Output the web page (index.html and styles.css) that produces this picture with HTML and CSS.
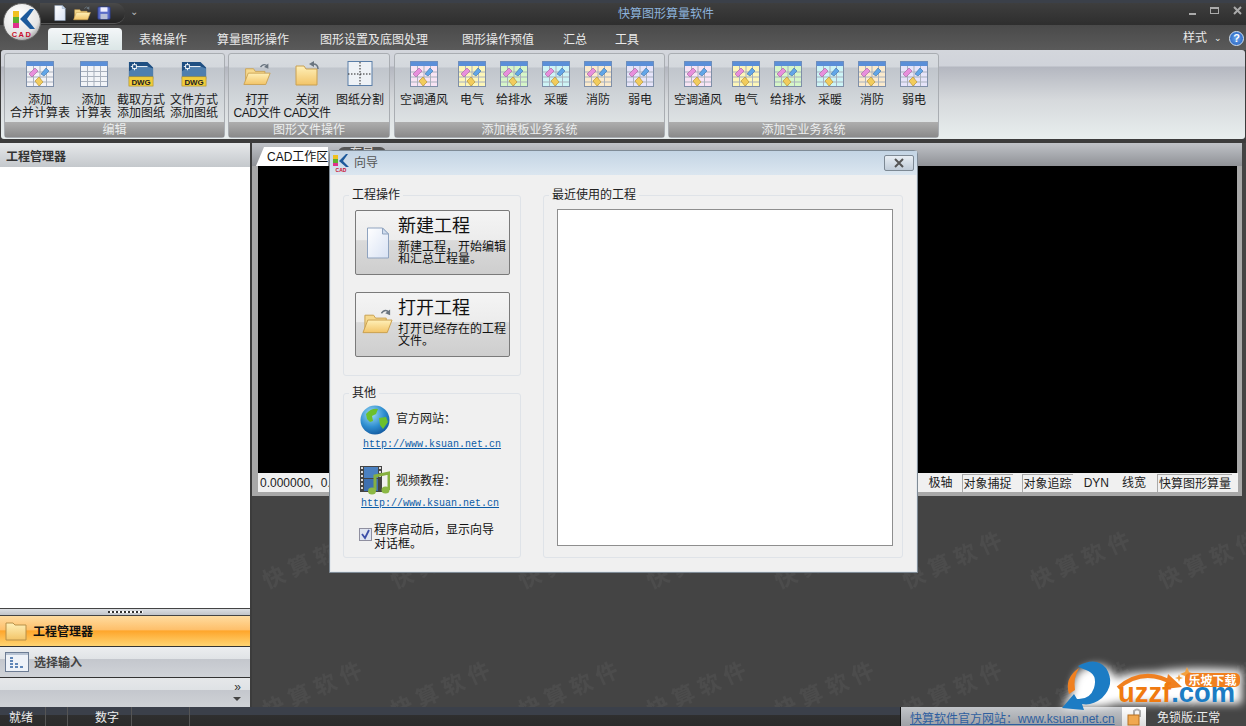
FILE: index.html
```html
<!DOCTYPE html>
<html lang="zh-CN">
<head>
<meta charset="utf-8">
<title>快算图形算量软件</title>
<link rel="stylesheet" href="styles.css">
</head>
<body>
<svg class="defs" width="0" height="0">
  <defs>
    <linearGradient id="fold" x1="0" y1="0" x2="0" y2="1"><stop offset="0" stop-color="#fff0b8"/><stop offset="1" stop-color="#f2c468"/></linearGradient>
    <linearGradient id="page" x1="0" y1="0" x2="1" y2="1"><stop offset="0" stop-color="#fff"/><stop offset="1" stop-color="#d8e2f4"/></linearGradient>
    <radialGradient id="sea" cx=".38" cy=".3" r=".8"><stop offset="0" stop-color="#9fdcf5"/><stop offset=".55" stop-color="#2f8ed0"/><stop offset="1" stop-color="#0d4f96"/></radialGradient>
    <symbol id="table" viewBox="0 0 28 26">
      <rect x=".5" y=".5" width="27" height="25" fill="var(--tint)" stroke="#7f8fa8"/>
      <rect x=".5" y=".5" width="27" height="4.500" fill="#5b8fd8"/>
      <path d="M1 11h26M1 16h26M1 21h26M7.500 5v20M14 5v20M20.500 5v20" stroke="#a9b1bd" fill="none"/>
      <path d="M3 13l6-6 3 3-6 6z" fill="#e88fdc" stroke="#a0609c" stroke-width=".6"/>
      <path d="M15 13l5-6 3 3-5 5z" fill="#62a6e8" stroke="#3a70a8" stroke-width=".6"/>
      <path d="M9 20l4-4 4 5-4 4z" fill="#f2cc5c" stroke="#b08c2c" stroke-width=".6"/>
    </symbol>
    <symbol id="plain" viewBox="0 0 28 26">
      <rect x=".5" y=".5" width="27" height="25" fill="#f2f4f8" stroke="#7f8fa8"/>
      <rect x=".5" y=".5" width="27" height="4.500" fill="#5b8fd8"/>
      <path d="M1 10.500h26M1 15.500h26M1 20.500h26M7.500 5v20M14 5v20M20.500 5v20" stroke="#a9b1bd" fill="none"/>
    </symbol>
    <symbol id="folderopen" viewBox="0 0 32 28">
      <path d="M3 24V8h9l2 3h11v13z" fill="#f6d98e" stroke="#c9a050"/>
      <path d="M1 26l5-13h25l-5 13z" fill="url(#fold)" stroke="#c9a050"/>
      <path d="M20 6q4-5 8-1" fill="none" stroke="#6a7580" stroke-width="1.500"/><path d="M29 2l0 6-5-2z" fill="#6a7580"/>
    </symbol>
    <symbol id="doc" viewBox="0 0 24 32">
      <path d="M1.500 1h15l6 6v24h-21z" fill="url(#page)" stroke="#8fa3bf"/><path d="M16.500 1v6h6z" fill="#cfdcee" stroke="#8fa3bf"/>
    </symbol>
    <symbol id="dwg" viewBox="0 0 28 28">
      <path d="M1 1h20l6 6v12H1z" fill="#1f4f82"/>
      <path d="M1 11Q14 2 27 8v11H1z" fill="#4f7fae"/>
      <path d="M3 6h18M7 2v8" stroke="#fff" fill="none"/><rect x="5" y="4" width="4" height="4" fill="#1f4f82" stroke="#fff"/>
      <rect x="1" y="17" width="26" height="10" fill="#f0cc3c" stroke="#a88820" stroke-width=".6"/>
      <text x="14" y="26" text-anchor="middle" class="dwgt">DWG</text>
    </symbol>
  </defs>
</svg>
<div class="app">
  <header class="titlebar">
    <div class="qat">
      <svg class="qi" width="14" height="16" viewBox="0 0 24 32"><use href="#doc"/></svg>
      <svg class="qi" width="18" height="16" viewBox="0 0 32 28"><use href="#folderopen"/></svg>
      <svg class="qi" width="14" height="14" viewBox="0 0 16 16"><rect x="1" y="1" width="14" height="14" rx="1" fill="#5a6cc8" stroke="#2c3a80"/><rect x="4" y="1.500" width="8" height="5" fill="#eef"/><rect x="4" y="9" width="8" height="6" fill="#b8bfd8"/></svg>
    </div>
    <span class="qmore">⌄</span>
    <div class="title">快算图形算量软件</div>
    <div class="winbtns">
      <svg width="10" height="12" viewBox="0 0 10 12"><rect x="1" y="8" width="7" height="2" fill="#aaa"/></svg>
      <svg width="12" height="12" viewBox="0 0 12 12"><rect x="1.500" y="2.500" width="8" height="6" fill="none" stroke="#aaa"/><rect x="1" y="2" width="9" height="2" fill="#aaa"/></svg>
      <svg width="12" height="12" viewBox="0 0 12 12"><path d="M2 2l7 7M9 2l-7 7" stroke="#aaa" stroke-width="2"/></svg>
    </div>
  </header>

  <nav class="tabs">
    <span class="tab active">工程管理</span>
    <span class="tab t2">表格操作</span>
    <span class="tab t3">算量图形操作</span>
    <span class="tab t4">图形设置及底图处理</span>
    <span class="tab t5">图形操作预值</span>
    <span class="tab t6">汇总</span>
    <span class="tab t7">工具</span>
    <div class="tabright">
      <span>样式</span><span class="caret">⌄</span><span class="help">?</span>
    </div>
  </nav>

  <section class="ribbon">
    <div class="group g1">
      <div class="grow">
        <div class="rb w64"><svg class="ic"><use href="#table" style="--tint:#f2f2f6"/></svg><span>添加<br>合并计算表</span></div>
        <div class="rb w43"><svg class="ic"><use href="#plain"/></svg><span>添加<br>计算表</span></div>
        <div class="rb w52"><svg class="ic"><use href="#dwg"/></svg><span>截取方式<br>添加图纸</span></div>
        <div class="rb w54"><svg class="ic"><use href="#dwg"/></svg><span>文件方式<br>添加图纸</span></div>
      </div>
      <div class="glabel">编辑</div>
    </div>
    <div class="group g2">
      <div class="grow">
        <div class="rb w48 tight"><svg class="ic"><use href="#folderopen"/></svg><span>打开<br>CAD文件</span></div>
        <div class="rb w52 tight"><svg class="ic" viewBox="0 0 28 26"><path d="M3 24V5h8l2 3h11v16z" fill="url(#fold)" stroke="#c9a050"/><path d="M25 8q0-5-5-5" fill="none" stroke="#6a7580" stroke-width="1.500"/><path d="M16 3l5-3v6z" fill="#6a7580"/></svg><span>关闭<br>CAD文件</span></div>
        <div class="rb w54"><svg class="ic" viewBox="0 0 28 26"><rect x="2" y=".5" width="24" height="24" fill="#eef2f6" stroke="#5b7fa8"/><path d="M14 1v23M2 13h24" stroke="#222" stroke-dasharray="1.500 1.500"/></svg><span>图纸分割</span></div>
      </div>
      <div class="glabel">图形文件操作</div>
    </div>
    <div class="group g3">
      <div class="grow">
        <div class="rb w54"><svg class="ic"><use href="#table" style="--tint:#f8e4f4"/></svg><span>空调通风</span></div>
        <div class="rb w42"><svg class="ic"><use href="#table" style="--tint:#fdf6b8"/></svg><span>电气</span></div>
        <div class="rb w42"><svg class="ic"><use href="#table" style="--tint:#d6f6c8"/></svg><span>给排水</span></div>
        <div class="rb w42"><svg class="ic"><use href="#table" style="--tint:#cdf4f6"/></svg><span>采暖</span></div>
        <div class="rb w42"><svg class="ic"><use href="#table" style="--tint:#fbeacc"/></svg><span>消防</span></div>
        <div class="rb w42"><svg class="ic"><use href="#table" style="--tint:#e6e4fa"/></svg><span>弱电</span></div>
      </div>
      <div class="glabel">添加模板业务系统</div>
    </div>
    <div class="group g3">
      <div class="grow">
        <div class="rb w54"><svg class="ic"><use href="#table" style="--tint:#f8e4f4"/></svg><span>空调通风</span></div>
        <div class="rb w42"><svg class="ic"><use href="#table" style="--tint:#fdf6b8"/></svg><span>电气</span></div>
        <div class="rb w42"><svg class="ic"><use href="#table" style="--tint:#d6f6c8"/></svg><span>给排水</span></div>
        <div class="rb w42"><svg class="ic"><use href="#table" style="--tint:#cdf4f6"/></svg><span>采暖</span></div>
        <div class="rb w42"><svg class="ic"><use href="#table" style="--tint:#fbeacc"/></svg><span>消防</span></div>
        <div class="rb w42"><svg class="ic"><use href="#table" style="--tint:#e6e4fa"/></svg><span>弱电</span></div>
      </div>
      <div class="glabel">添加空业务系统</div>
    </div>
  </section>

  <main class="main">
    <aside class="side">
      <div class="sidehead">工程管理器</div>
      <div class="sidebody"></div>
      <div class="splitter"><i></i></div>
      <div class="navitem on">
        <svg width="22" height="20" viewBox="0 0 22 20"><path d="M1 19V2h7l2 2h11v15z" fill="url(#fold)" stroke="#b89048"/></svg>
        <b>工程管理器</b>
      </div>
      <div class="navitem">
        <svg width="24" height="20" viewBox="0 0 24 20"><rect x=".5" y=".5" width="23" height="19" fill="#eef2f8" stroke="#6c7c94"/><rect x="1" y="1" width="22" height="2" fill="#b8c4d4"/><path d="M5 6h3M5 9h3M5 12h3M5 15h3M10 12h3M15 15h3M10 15h3" stroke="#5f86b8" stroke-width="2"/></svg>
        <b class="dim">选择输入</b>
      </div>
      <div class="navfoot"><span>»</span><i></i></div>
    </aside>

    <section class="work">
      <div class="cadwin">
        <div class="cadtabs"><span class="cadtab">CAD工作区</span><span class="cadtab2">布局</span></div>
        <div class="canvas"></div>
        <div class="cmdrow">
          <span class="coord">0.000000, 0.000000</span>
          <span class="cell">极轴</span>
          <span class="cell box">对象捕捉</span>
          <span class="cell box">对象追踪</span>
          <span class="cell m11">DYN</span>
          <span class="cell m13">线宽</span>
          <span class="cell box m11 last">快算图形算量</span>
        </div>
      </div>
      <svg class="wm" width="994" height="210">
        <defs>
          <pattern id="wmp" width="128" height="130" patternUnits="userSpaceOnUse">
            <text x="15" y="92" class="wmt" transform="rotate(-24 15 92)">快算软件</text>
          </pattern>
        </defs>
        <rect width="994" height="210" fill="url(#wmp)"/>
      </svg>
    </section>
  </main>

  <footer class="status">
    <span class="st s1">就绪</span><span class="st s2"></span><span class="st s3">数字</span><span class="st s4"></span>
    <div class="stright">
      <a class="stlink">快算软件官方网站：www.ksuan.net.cn</a>
      <span class="lock"><svg width="17" height="19" viewBox="0 0 17 19"><path d="M8 8V4q3-3 6 0v6" fill="none" stroke="#aaa" stroke-width="2"/><rect x="2" y="8" width="11" height="10" fill="#f0a850" stroke="#b87020"/></svg></span>
      <span class="free">免锁版:正常</span>
    </div>
  </footer>
</div>

<svg class="applogo" width="40" height="40" viewBox="0 0 40 40">
  <defs><radialGradient id="orb" cx=".4" cy=".3" r=".8"><stop offset="0" stop-color="#fff"/><stop offset=".7" stop-color="#e4e4e4"/><stop offset="1" stop-color="#8a8a8a"/></radialGradient></defs>
  <circle cx="20" cy="20" r="18.500" fill="url(#orb)" stroke="#666"/>
  <rect x="11" y="9" width="6" height="6" fill="#f0c020"/><rect x="11" y="15" width="6" height="6" fill="#5cb030"/><rect x="11" y="21" width="6" height="5" fill="#e0308c"/>
  <path d="M28 7L18 17l10 10h5L25 17l7-10z" fill="#1d5a9c"/>
  <text x="20" y="35" text-anchor="middle" class="cadt">CAD</text>
</svg>

<div class="dialog">
  <div class="dlgtitle">
    <svg width="16" height="18" viewBox="0 0 16 18"><rect x="0" y="1" width="5" height="4" fill="#f0c020"/><rect x="0" y="5" width="5" height="4" fill="#5cb030"/><rect x="0" y="9" width="5" height="3" fill="#e0308c"/><path d="M13 0L6 7l7 6h3L10 7l5-7z" fill="#1d5a9c"/><text x="8" y="18" text-anchor="middle" class="cadm">CAD</text></svg>
    <span>向导</span>
    <span class="dlgx"><svg width="12" height="10" viewBox="0 0 12 10"><path d="M2 1l8 8M10 1l-8 8" stroke="#555" stroke-width="2"/></svg></span>
  </div>
  <div class="dlgbody">
    <div class="dlgleft">
      <fieldset class="gbox ops">
        <legend>工程操作</legend>
        <div class="bigbtn">
          <svg class="bigic doc" width="24" height="32" viewBox="0 0 24 32"><use href="#doc"/></svg>
          <div><h2>新建工程</h2><p>新建工程，开始编辑和汇总工程量。</p></div>
        </div>
        <div class="bigbtn">
          <svg class="bigic fo" width="31" height="28" viewBox="0 0 32 28"><use href="#folderopen"/></svg>
          <div><h2>打开工程</h2><p>打开已经存在的工程文件。</p></div>
        </div>
      </fieldset>
      <fieldset class="gbox other">
        <legend>其他</legend>
        <div class="orow r1">
          <svg width="30" height="30" viewBox="0 0 30 30"><circle cx="15" cy="15" r="14.500" fill="url(#sea)"/><path d="M6 9q5-6 12-5l-2 5-4 2 1 5-3 1-3-3zM19 13l7-1 2 5-5 7-3-4z" fill="#6cc02c"/></svg>
          <span>官方网站：</span>
        </div>
        <a class="olink">http://www.ksuan.net.cn</a>
        <div class="orow r2">
          <svg width="30" height="30" viewBox="0 0 30 30"><rect x="0" y="0" width="22" height="26" fill="#444"/><rect x="4" y="1" width="14" height="11" fill="#4a80c0"/><rect x="4" y="13" width="14" height="12" fill="#3e70b0"/><path d="M1 2h2M1 6h2M1 10h2M1 14h2M1 18h2M1 22h2M19 2h2M19 6h2M19 10h2" stroke="#ddd" stroke-width="2"/><path d="M15 24V10l14-3v17" fill="none" stroke="#86b040" stroke-width="3"/><ellipse cx="12" cy="25" rx="4" ry="3.500" fill="#8cb844"/><ellipse cx="25.500" cy="24" rx="4" ry="3.500" fill="#8cb844"/></svg>
          <span>视频教程：</span>
        </div>
        <a class="olink l2">http://www.ksuan.net.cn</a>
        <label class="chk"><span class="cb"><svg width="11" height="11" viewBox="0 0 11 11"><path d="M2 5l3 4 4-8" fill="none" stroke="#3c4fa8" stroke-width="1.800"/></svg></span><span class="chktxt">程序启动后，显示向导对话框。</span></label>
      </fieldset>
    </div>
    <fieldset class="gbox recent">
      <legend>最近使用的工程</legend>
      <div class="listbox"></div>
    </fieldset>
  </div>
</div>

<svg class="uzzf" width="190" height="60" viewBox="0 0 190 60">
  <path d="M6 50L16 34Q16 12 34 8Q52 4 60 20Q70 14 100 14Q130 8 186 12V46H60Q50 50 30 50Z" class="glow"/>
  <path d="M22 8Q40 -2 50 10Q60 26 46 40Q36 48 26 46L28 52L6 50L18 36L21 41Q34 42 38 30Q42 16 30 12Q24 10 22 8Z" fill="#1c7cc4"/>
  <path d="M13 36Q8 20 23 10Q17 20 19 32Z" fill="#f08020"/>
  <path d="M62 30Q88 8 118 26" fill="none" stroke="#f08020" stroke-width="4"/>
  <path d="M112 16l14 13-17 2z" fill="#f08020"/>
  <path d="M129 14l2-5 2 5 5 2-5 2-2 5-2-5-5-2zM122 19l1-3 1 3 3 1-3 1-1 3-1-3-3-1z" fill="#f2a040"/>
  <rect x="129" y="15" width="55" height="14" rx="5" fill="#f08020"/>
  <text x="156.500" y="26.500" text-anchor="middle" class="uzt">乐坡下载</text>
  <text x="62" y="44" class="uzb" textLength="117" lengthAdjust="spacingAndGlyphs"><tspan fill="#f07a10">uzzf</tspan><tspan fill="#1c7cc4">.com</tspan></text>
</svg>
</body>
</html>
```
FILE: styles.css
```css
* { box-sizing: border-box; }
html, body { margin: 0; padding: 0; }
body {
  width: 1246px; height: 726px; overflow: hidden; position: relative;
  background: #3c3c3c; color: #1c1c1c;
  font: 12px/13px "Liberation Sans", "Noto Sans CJK SC", sans-serif;
}
.defs { position: absolute; }
.app { display: flex; flex-direction: column; height: 726px; }

.titlebar {
  height: 25px; flex: none; display: flex; align-items: center; padding-left: 40px; position: relative;
  border-top: 3px solid #3b4049;
  background: linear-gradient(#3e3e3e, #2e2e2e);
}
.qat {
  width: 85px; height: 20px; margin-top: -2px; display: flex; align-items: center; gap: 6px; padding-left: 13px;
  background: linear-gradient(#4a4a4a, #222); border-radius: 0 10px 10px 0; box-shadow: 0 1px 0 #555;
}
.qi { flex: none; }
.qmore { margin: -6px 0 0 5px; color: #bbb; font-size: 10px; }
.title { position: absolute; left: 566px; width: 200px; top: 4px; text-align: center; color: #8db3dc; line-height: 14px; }
.winbtns { position: absolute; right: 2px; top: 2px; display: flex; gap: 11px; align-items: center; }

.tabs {
  height: 25px; flex: none; display: flex; align-items: flex-end; padding-left: 48px; position: relative;
  color: #eaeaea; background: linear-gradient(#4a4a4a, #5a5a5a);
}
.tab { height: 22px; line-height: 25px; white-space: nowrap; }
.tab.active {
  width: 74px; text-align: center; color: #111; border-radius: 4px 4px 0 0;
  background: linear-gradient(#f4f7f9, #dbe6e6);
}
.t2 { margin-left: 17px; }
.t3 { margin-left: 30px; }
.t4 { margin-left: 31px; }
.t5 { margin-left: 34px; }
.t6 { margin-left: 29px; }
.t7 { margin-left: 28px; }
.tabright { position: absolute; left: 1183px; top: 5px; display: flex; align-items: center; height: 16px; }
.caret { margin-left: 7px; font-size: 9px; }
.help {
  margin-left: 7px; width: 15px; height: 15px; border-radius: 50%; text-align: center; line-height: 13px; font-weight: bold;
  color: #fff; background: radial-gradient(#6aa4ec, #1c58b8); border: 1px solid #cfe0f4; font-size: 11px;
}

.ribbon {
  height: 89px; margin: 0 1px; flex: none; display: flex; padding: 3px 0 0 3px; gap: 3px; border-radius: 3px;
  background: linear-gradient(#d3d6dc 0, #d0d3da 16px, #b4b7c0 17px, #d6d9dc 50px, #e8eeee 100%);
}
.group {
  height: 85px; display: flex; flex-direction: column; border: 1px solid #a9adb2; border-radius: 3px;
  background: linear-gradient(#d8dce0 0, #d4d8dd 13px, #c0c5cc 14px, #e6eaea 100%);
}
.g1 { width: 221px; }
.g2 { width: 162px; }
.g3 { width: 271px; }
.g2 + .g3 { margin-left: 1px; }
.grow { flex: 1; display: flex; padding-left: 3px; }
.g2 .grow { padding-left: 4px; }
.g3 .grow { padding-left: 2px; }
.rb { display: flex; flex-direction: column; align-items: center; padding-top: 7px; text-align: center; white-space: nowrap; }
.rb span { margin-top: 7px; }
.tight span { letter-spacing: -.5px; }
.ic { width: 28px; height: 26px; display: block; flex: none; }
.w42 { width: 42px; } .w43 { width: 43px; } .w48 { width: 48px; } .w52 { width: 52px; } .w54 { width: 54px; } .w64 { width: 64px; }
.glabel {
  height: 15px; flex: none; text-align: center; line-height: 17px; color: #eceeee;
  background: linear-gradient(#aeaeae, #8a8a8a);
}
.dwgt { font: bold 8.500px "Liberation Sans", sans-serif; fill: #222; }
.cadt { font: bold 7.500px "Liberation Sans", sans-serif; fill: #c8102e; letter-spacing: 1.500px; }
.cadm { font: bold 5px "Liberation Sans", sans-serif; fill: #c8102e; }

.main { flex: 1; min-height: 0; display: flex; margin-top: 4px; }
.side { width: 250px; flex: none; display: flex; flex-direction: column; background: #fff; }
.sidehead {
  height: 24px; flex: none; padding-left: 6px; line-height: 28px; font-weight: bold; color: #333;
  background: linear-gradient(#e6e8ea, #c4c8cc);
}
.sidebody { flex: 1; background: #fff; }
.splitter {
  height: 8px; flex: none; border-top: 1px solid #444; border-bottom: 1px solid #444; display: flex; justify-content: center; align-items: center;
  background: linear-gradient(#dcdfe3, #c2c5ca);
}
.splitter i { width: 35px; height: 2px; background: repeating-linear-gradient(90deg, #333 0 2px, #fff 2px 4px); }
.navitem {
  height: 31px; flex: none; display: flex; align-items: center; padding-left: 5px; gap: 6px; border-bottom: 1px solid #333;
  background: linear-gradient(#eceef0 0, #e0e3e6 40%, #c4c7cd 41%, #d0d3d8 100%);
}
.navitem b { color: #111; margin-top: 2px; }
.navitem b.dim { color: #444; margin-left: -1px; }
.navitem.on { background: linear-gradient(#ffdca0 0, #fec06c 45%, #fea62c 50%, #ffd472 100%); }
.navfoot {
  flex: none; height: 29px; position: relative; display: flex; flex-direction: column; align-items: flex-end; padding: 3px 9px 0 0; color: #333;
  background: linear-gradient(#e6e8ea 0, #dfe2e5 40%, #c4c7cd 41%, #cfd2d6 100%);
}
.navfoot span { line-height: 13px; font-size: 12px; }
.navfoot i { margin: 3px 0 0; border: 4px solid transparent; border-top-color: #444; border-bottom: 0; }

.work { flex: 1; min-width: 0; margin-left: 2px; background: #444; position: relative; }
.cadwin { width: 990px; height: 353px; background: #a8a8a8; position: relative; }
.cadtabs {
  height: 23px; display: flex; align-items: flex-end; padding-left: 4px; position: relative;
  background: linear-gradient(#c0c3c8, #8f9196);
}
.cadtab {
  width: 72px; height: 19px; padding-left: 11px; line-height: 20px; background: #fff; color: #111; white-space: nowrap;
  clip-path: polygon(8px 0, 100% 0, 100% 100%, 0 100%);
}
.cadtab2 { margin-left: 10px; width: 48px; height: 19px; background: #555; color: #ddd; border-radius: 6px 6px 0 0; text-align: center; }
.canvas { height: 307px; margin: 0 5px 0 6px; background: #000; }
.cmdrow {
  height: 19px; margin: 0 4px 0 6px; display: flex; align-items: center; background: #f0f0f0; color: #222; position: relative;
}
.coord { margin-left: 2px; white-space: nowrap; line-height: 20px; word-spacing: 4px; }
.cell { position: relative; line-height: 20px; white-space: nowrap; margin-left: 9px; }
.coord + .cell { margin-left: auto; }
.m11 { margin-left: 11px; }
.m13 { margin-left: 13px; }
.cell.box { padding: 0 1px; border-top: 1px solid #aaa; border-left: 1px solid #aaa; height: 18px; line-height: 19px; }
.cell.last { margin-right: 6px; }
.wm { position: absolute; left: 0; top: 354px; }
.wmt { font: bold 22px "Liberation Serif", "Noto Sans CJK SC", serif; letter-spacing: 6px; fill: #4c4c4c; }

.status {
  height: 19px; flex: none; display: flex; color: #eee; line-height: 22px;
  background: linear-gradient(#3b404a 0, #3b404a 40%, #2f2f2f 41%, #2b2b2b 100%);
}
.st { height: 19px; border-right: 1px solid #555; white-space: nowrap; }
.s1 { width: 46px; padding-left: 9px; }
.s2 { width: 22px; }
.s3 { width: 64px; padding-left: 27px; }
.s4 { width: 58px; }
.stright { margin-left: auto; width: 346px; display: flex; align-items: stretch; border-left: 1px solid #111; }
.stlink {
  width: 221px; padding-left: 9px; color: #2f5f9f; text-decoration: underline; white-space: nowrap; line-height: 24px;
  background: linear-gradient(#c2c5c9, #9ea1a6);
}
.lock { width: 24px; display: flex; align-items: center; justify-content: center; background: linear-gradient(#fff, #ddd); }
.free { flex: 1; padding-left: 11px; background: #454545; line-height: 23px; }

.applogo { position: absolute; left: 2px; top: 2px; }

.dialog {
  position: absolute; left: 329px; top: 150px; width: 589px; height: 423px; display: flex; flex-direction: column;
  background: #f0f0f0; border: 1px solid #7f8b96; border-radius: 4px 4px 0 0; box-shadow: 0 0 0 1px #e4e8ec inset;
}
.dlgtitle {
  height: 24px; flex: none; display: flex; align-items: center; gap: 5px; padding-left: 3px; color: #555; position: relative;
  background: linear-gradient(#c3d4e4, #dbe6f0);
}
.dlgx {
  position: absolute; right: 3px; top: 4px; width: 30px; height: 16px; display: flex; align-items: center; justify-content: center;
  border: 1px solid #7d8994; border-radius: 2px; background: linear-gradient(#e8eef4, #c0ccd8);
}
.dlgbody { flex: 1; display: flex; padding: 12px 0 0 13px; gap: 22px; }
.dlgleft { width: 178px; display: flex; flex-direction: column; gap: 9px; }
.gbox { margin: 0; padding: 0; min-width: 0; border: 1px solid #dfe3e8; border-radius: 3px; }
.gbox legend { margin-left: 5px; padding: 0 3px; line-height: 16px; height: 16px; color: #222; }
.ops { height: 189px; padding: 7px 10px 0 11px; }
.ops legend { margin-left: -6px; }
.other { height: 173px; }
.recent { width: 360px; height: 371px; padding: 6px 0 0 13px; }
.recent legend { margin-left: -8px; }
.listbox { width: 336px; height: 337px; background: #fff; border: 1px solid #8e8e8e; }
.bigbtn {
  height: 65px; display: flex; margin-bottom: 17px; border: 1px solid #7a7a7a; border-radius: 2px;
  background: linear-gradient(#f4f4f4 0, #ececec 46%, #dadada 47%, #cecece 100%);
}
.bigbtn > div { width: 112px; padding-top: 5px; }
.bigic { flex: none; overflow: visible; }
.bigic.doc { margin: 16px 8px 0 10px; }
.bigic.fo { margin: 14px 5px 0 6px; }
.bigbtn h2 { margin: 0; font-size: 18px; line-height: 20px; font-weight: normal; color: #111; }
.bigbtn p { margin: 5px 0 0; line-height: 12px; color: #111; }
.orow { display: flex; align-items: center; gap: 6px; padding-left: 16px; margin-top: 4px; height: 30px; }
.r1 span { margin-top: -2px; }
.orow.r2 { margin-top: 14px; }
.olink { display: block; margin: 3px 0 0 19px; font: 10px/14px "Liberation Mono", monospace; color: #0c5ca6; text-decoration: underline; }
.olink.l2 { margin-left: 17px; margin-top: 1px; }
.chk { display: flex; margin: 12px 0 0 15px; gap: 2px; line-height: 14px; color: #111; }
.chktxt { width: 122px; }
.cb { width: 13px; height: 13px; flex: none; margin-top: 5px; border: 1px solid #8f8f9f; background: #dfe4f0; display: flex; align-items: center; justify-content: center; }

.uzzf { position: absolute; left: 1056px; top: 658px; overflow: visible; }
.glow { fill: #fff; filter: blur(4px); }
.uzt { font: bold 12px "Noto Sans CJK SC", sans-serif; fill: #fff; }
.uzb { font: bold 28px "Liberation Sans", sans-serif; }
```
